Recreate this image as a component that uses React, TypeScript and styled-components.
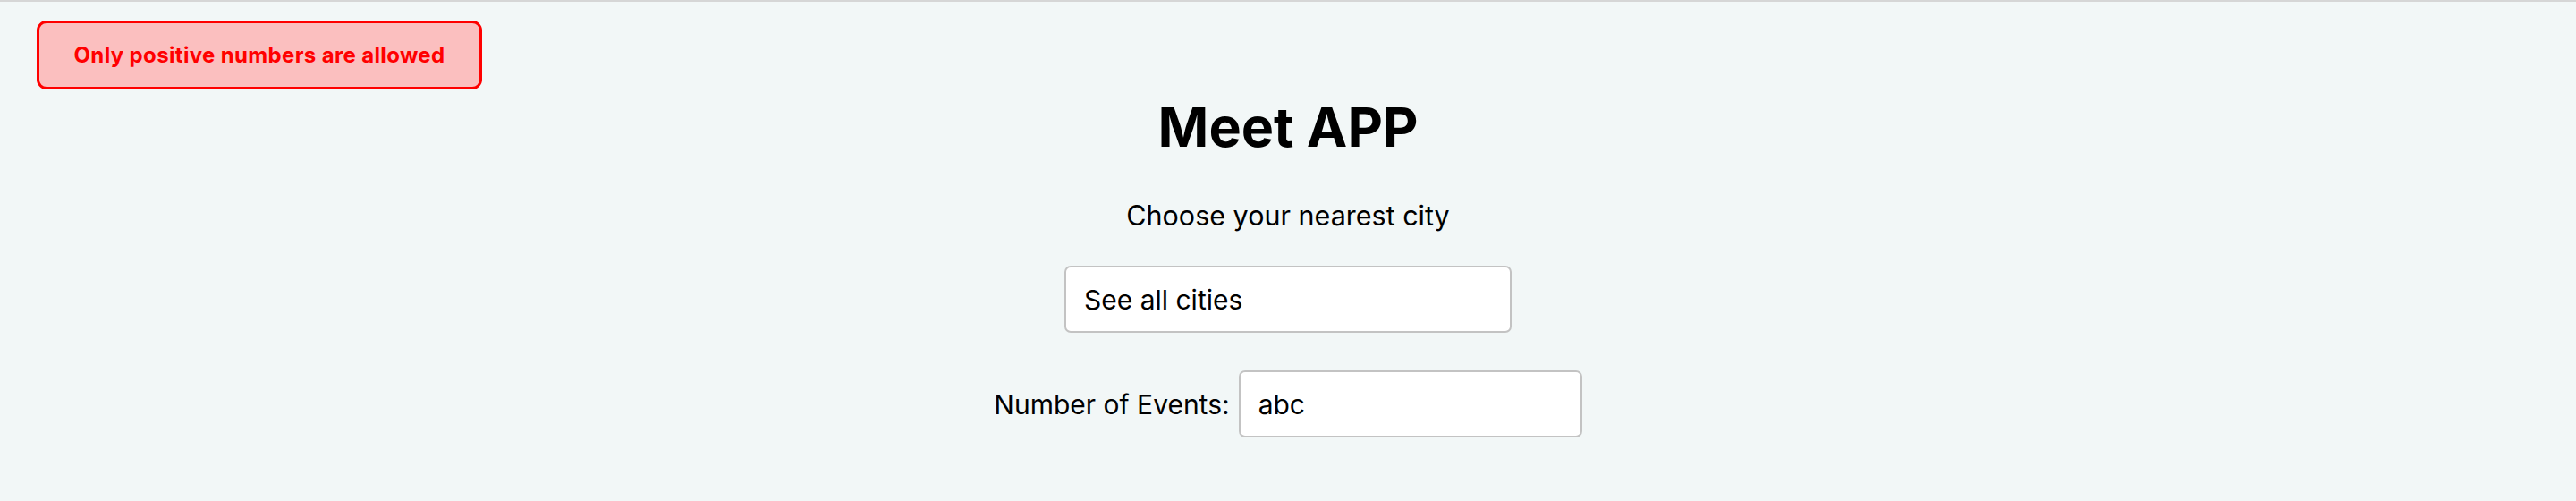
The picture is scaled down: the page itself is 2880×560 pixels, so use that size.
import React from "react";
import styled, { createGlobalStyle } from "styled-components";

const GlobalStyle = createGlobalStyle`
  html, body {
    margin: 0;
    padding: 0;
    background: #f2f7f7;
    font-family: Inter, "Noto Sans", "Liberation Sans", sans-serif;
    color: #000;
  }
  * { box-sizing: border-box; }
`;

const Page = styled.div`
  position: relative;
  min-height: 560px;
  border-top: 2px solid #d6d6d6;
  display: flex;
  flex-direction: column;
  align-items: center;
  padding-top: 104px;
`;

const Alert = styled.div`
  position: absolute;
  top: 21px;
  left: 41px;
  width: 498px;
  height: 77px;
  display: flex;
  align-items: center;
  justify-content: center;
  background: #fbbfbf;
  border: 3.5px solid #ff0000;
  border-radius: 11px;
  color: #ff0000;
  font-size: 24px;
  font-weight: 700;
  letter-spacing: 0.35px;
`;

const Title = styled.h1`
  margin: 0;
  font-size: 61px;
  line-height: 72px;
  font-weight: 700;
`;

const Label = styled.label`
  font-size: 30px;
  line-height: 36px;
  font-weight: 400;
`;

const Prompt = styled(Label)`
  display: block;
  margin-top: 45px;
  font-size: 30.5px;
`;

const Field = styled.input<{ $width: number }>`
  width: ${(p) => p.$width}px;
  height: 75px;
  padding: 0 20px;
  background: #fff;
  border: 2px solid #c3c3c3;
  border-radius: 7px;
  font-family: inherit;
  font-size: 30px;
  color: #000;
  outline: none;
`;

const CityField = styled(Field)`
  margin-top: 38px;
`;

const EventsRow = styled.div`
  margin-top: 42px;
  display: flex;
  align-items: center;
  gap: 10px;
`;

export default function App() {
  return (
    <>
      <GlobalStyle />
      <Page>
        <Alert>Only positive numbers are allowed</Alert>
        <Title>Meet APP</Title>
        <Prompt htmlFor="city">Choose your nearest city</Prompt>
        <CityField id="city" $width={500} defaultValue="See all cities" readOnly />
        <EventsRow>
          <Label htmlFor="events">Number of Events:</Label>
          <Field id="events" $width={384} defaultValue="abc" readOnly />
        </EventsRow>
      </Page>
    </>
  );
}
